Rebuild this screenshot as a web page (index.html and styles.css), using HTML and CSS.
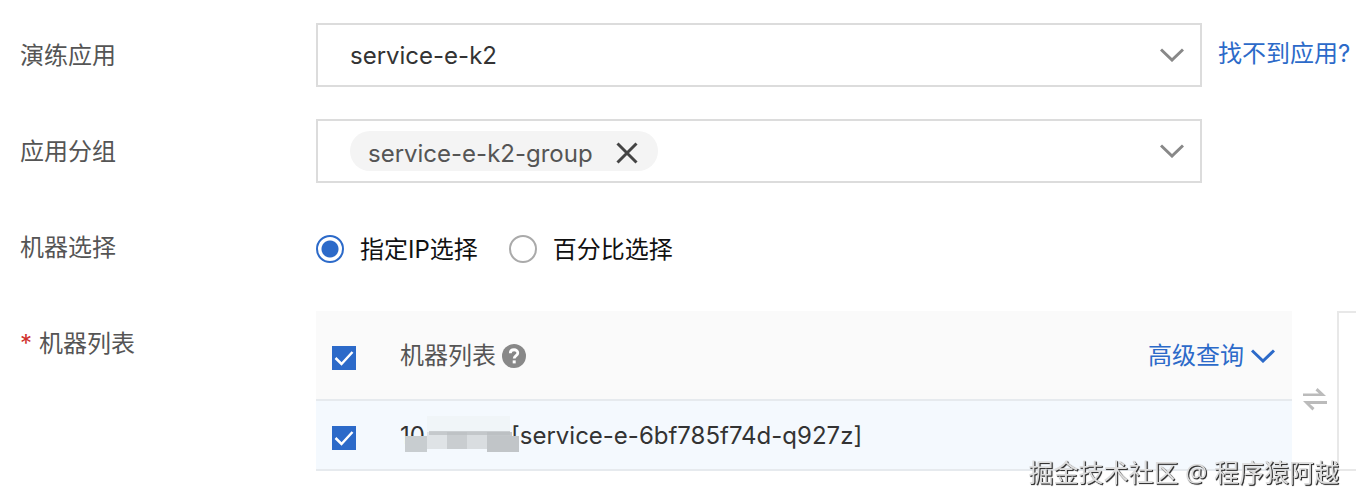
FILE: index.html
```html
<!DOCTYPE html>
<html lang="zh-CN">
<head>
  <meta charset="UTF-8">
  <meta name="viewport" content="width=device-width, initial-scale=1.0">
  <title>演练对象</title>
  <link rel="stylesheet" href="styles.css">
</head>

<body>
  <form class="form">
    <!-- 演练应用 -->
    <label class="form-label" for="app">演练应用</label>
    <div class="select-wrapper">
      <select id="app" class="box">
        <option selected>service-e-k2</option>
      </select>
      <svg class="arrow" viewBox="0 0 24 14"><path d="M1 1.5 L12 12 L23 1.5"/></svg>
    </div>
    <a class="link help-link" href="#">找不到应用?</a>

    <!-- 应用分组 -->
    <label class="form-label" for="group">应用分组</label>
    <div class="box tag-box">
      <span class="tag">
        <span class="tag-text">service-e-k2-group</span>
        <button class="tag-close" type="button" aria-label="删除">
          <svg viewBox="0 0 22 22"><path d="M1.5 1.5 L20.5 20.5 M20.5 1.5 L1.5 20.5"/></svg>
        </button>
      </span>
      <input id="group" class="tag-input" type="text">
      <svg class="arrow" viewBox="0 0 24 14"><path d="M1 1.5 L12 12 L23 1.5"/></svg>
    </div>

    <!-- 机器选择 -->
    <span class="form-label">机器选择</span>
    <div class="radio-group">
      <label class="radio"><input type="radio" name="mode" checked><span>指定IP选择</span></label>
      <label class="radio"><input type="radio" name="mode"><span>百分比选择</span></label>
    </div>

    <!-- 机器列表 -->
    <span class="form-label"><span class="required">*</span>机器列表</span>
    <div class="transfer">
      <table class="machines">
        <thead>
          <tr>
            <th class="check-cell"><input type="checkbox" aria-label="全选" checked></th>
            <th>
              <div class="head">
                <span>机器列表</span>
                <svg class="question" viewBox="0 0 24 24">
                  <circle cx="12" cy="12" r="12" fill="#888"/>
                  <path d="M8.3 9.2 C8.3 4.6 15.8 4.7 15.8 9 C15.8 11.6 12.2 11.6 12.2 14.6" fill="none" stroke="#fff" stroke-width="2.8"/>
                  <rect x="10.7" y="16.4" width="3" height="3" fill="#fff"/>
                </svg>
                <a class="link query-link" href="#">高级查询
                  <svg class="arrow" viewBox="0 0 24 14"><path d="M1 1.5 L12 12 L23 1.5"/></svg>
                </a>
              </div>
            </th>
          </tr>
        </thead>
        <tbody>
          <tr>
            <td class="check-cell"><input type="checkbox" aria-label="选择机器" checked></td>
            <td>
              <div class="machine">
                <span class="ip">10
                  <svg class="mask" viewBox="0 0 116 38">
                    <rect x="22" y="0" width="83" height="18" fill="#f0f5f8"/>
                    <rect x="22" y="16" width="20" height="17" fill="#dfe3e6"/>
                    <rect x="42" y="16" width="20" height="17" fill="#c9cdd0"/>
                    <rect x="62" y="16" width="20" height="17" fill="#d9dde0"/>
                    <rect x="82" y="16" width="25" height="17" fill="#c3c7ca"/>
                    <rect x="24" y="15" width="81" height="4" fill="#b9bdc0" opacity=".7"/>
                    <rect x="0" y="20" width="22" height="16" fill="#c8cdd0"/>
                    <rect x="82" y="20" width="32" height="16" fill="#c1c5c8"/>
                  </svg>
                </span>
                <span>[service-e-6bf785f74d-q927z]</span>
              </div>
            </td>
          </tr>
        </tbody>
      </table>
      <div class="swap">
        <svg viewBox="0 0 24 24"><path d="M0 8 H23 L14.5 0 L12.5 2.5 L16 5.5 H0 Z M24 13 H0 L9.5 22.5 L11.5 20 L7 16 H24 Z"/></svg>
      </div>
      <div class="target"></div>
    </div>
  </form>
  <div class="watermark">掘金技术社区 @ 程序猿阿越</div>
</body>
</html>
```
FILE: styles.css
```css
:root {
  --primary: #2c6ac9;
  --border: #dcdcdc;
  --text: #333;
  --label: #555;
}

* {
  box-sizing: border-box;
}

body {
  margin: 0;
  background: #fff;
  color: var(--text);
  font-family: Inter, "Noto Sans CJK SC", sans-serif;
  font-size: 24px;
  line-height: 32px;
}

input, select, button {
  margin: 0;
  font: inherit;
  color: inherit;
}

.form {
  display: grid;
  grid-template-columns: 296px minmax(0, 1fr) 154px;
  row-gap: 32px;
  padding: 23px 0 0 20px;
}

.form-label {
  grid-column: 1;
  height: 64px;
  line-height: 66px;
  color: var(--label);
}

.required {
  margin-right: 7px;
  color: #d0312d;
}

.link {
  color: var(--primary);
  text-decoration: none;
}

.help-link {
  padding-left: 16px;
  line-height: 62px;
  white-space: nowrap;
}

/* 选择框 */
.box {
  width: 100%;
  height: 64px;
  border: 2px solid var(--border);
  border-radius: 0;
  background: #fff;
}

.select-wrapper {
  position: relative;
}

.select-wrapper select {
  appearance: none;
  padding: 2px 64px 0 32px;
}

.arrow {
  width: 24px;
  height: 14px;
  fill: none;
  stroke: #888;
  stroke-width: 3;
}

.select-wrapper .arrow {
  position: absolute;
  top: 25px;
  right: 18px;
  pointer-events: none;
}

.tag-box {
  display: flex;
  align-items: center;
  padding: 0 16px 0 32px;
}

.tag {
  display: flex;
  align-items: center;
  gap: 23px;
  height: 40px;
  padding: 0 20px 0 18px;
  border-radius: 20px;
  background: #f4f4f4;
  color: var(--label);
}

.tag-text {
  padding-top: 5px;
}

.tag-close {
  display: flex;
  padding: 4px 0 0;
  border: 0;
  background: none;
}

.tag-close svg {
  width: 22px;
  height: 22px;
  stroke: #444;
  stroke-width: 3;
}

.tag-input {
  flex: 1;
  min-width: 0;
  border: 0;
  outline: none;
  background: none;
}

/* 单选 */
.radio-group {
  display: flex;
  align-items: center;
  gap: 31px;
  height: 68px;
  margin-bottom: -4px;
}

.radio {
  display: flex;
  align-items: center;
  gap: 16px;
  color: #111;
}

.radio span {
  padding-top: 2px;
}

.radio input {
  appearance: none;
  width: 28px;
  height: 28px;
  border: 2px solid #aaa;
  border-radius: 50%;
}

.radio input:checked {
  border-color: var(--primary);
  background: radial-gradient(circle, var(--primary) 8px, #fff 9px);
}

/* 穿梭框 */
.transfer {
  grid-column: 2 / 4;
  display: flex;
}

.machines {
  flex: 1;
  border-collapse: collapse;
}

.machines th,
.machines td {
  padding: 2px 0 0;
  border-bottom: 2px solid #e6eaee;
  font-weight: 400;
  text-align: left;
}

.machines th {
  height: 89px;
  background: #fafafa;
  color: var(--label);
}

.machines td {
  height: 70px;
  background: #f4f9fe;
}

.machines .check-cell {
  width: 84px;
  padding: 6px 0 0 16px;
}

.check-cell input {
  display: block;
  appearance: none;
  width: 24px;
  height: 24px;
  background: var(--primary) url("data:image/svg+xml,%3Csvg xmlns='http://www.w3.org/2000/svg' viewBox='0 0 24 24'%3E%3Cpath d='M3.5 12 L9.5 18 L20.5 6' fill='none' stroke='%23fff' stroke-width='2.5'/%3E%3C/svg%3E");
}

.head {
  display: flex;
  align-items: center;
  gap: 6px;
  padding-right: 17px;
}

.question {
  width: 24px;
  height: 24px;
}

.query-link {
  display: flex;
  align-items: center;
  gap: 7px;
  margin-left: auto;
}

.query-link .arrow {
  stroke: var(--primary);
}

.machine {
  display: flex;
}

.ip {
  position: relative;
  width: 111px;
}

/* 打码区域 */
.mask {
  position: absolute;
  top: -4px;
  left: 5px;
  width: 116px;
  height: 38px;
}

.swap {
  display: flex;
  align-items: center;
  justify-content: center;
  width: 45px;
  padding-top: 18px;
}

.swap svg {
  width: 24px;
  height: 24px;
  fill: #bbb;
}

.target {
  width: 19px;
  border: 2px solid #e8e8e8;
  border-right: 0;
}

.watermark {
  position: fixed;
  right: 17px;
  bottom: 16px;
  color: #dedede;
  font-family: "Open Sans", "Noto Sans CJK SC", sans-serif;
  font-size: 25px;
  text-shadow: 1px 1px 1px #333, 1px 1px 0 #444;
}
```
